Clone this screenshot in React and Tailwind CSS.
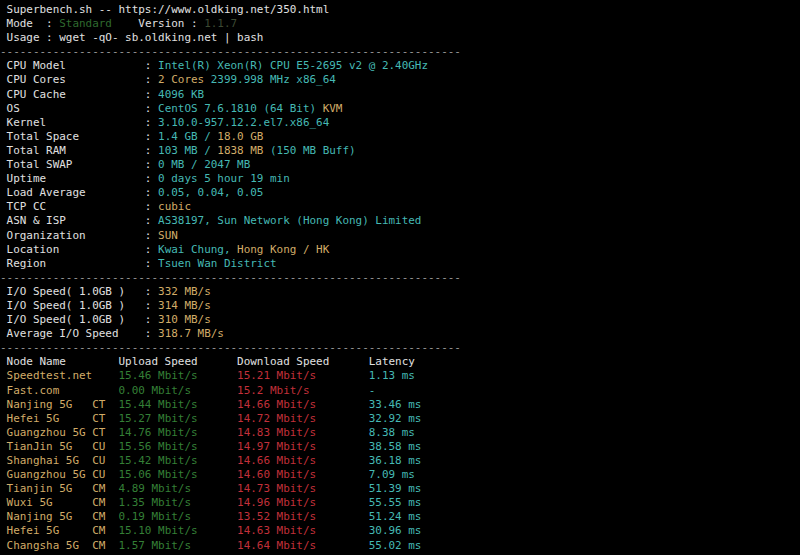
import React from "react";

const W = "text-[#e0e0e0]";
const C = "text-[#45b9b4]";
const Y = "text-[#d2ac68]";
const G = "text-[#347f36]";
const R = "text-[#c2303a]";
const DG = "text-[#2f6a2f]";
const DV = "text-[#3d4a33]";

const dash = "-".repeat(70);

const info = [
  ["CPU Model", [["Intel(R) Xeon(R) CPU E5-2695 v2 @ 2.40GHz", C]]],
  ["CPU Cores", [["2 Cores", Y], [" 2399.998 MHz x86_64", C]]],
  ["CPU Cache", [["4096 KB", C]]],
  ["OS", [["CentOS 7.6.1810 (64 Bit) ", C], ["KVM", Y]]],
  ["Kernel", [["3.10.0-957.12.2.el7.x86_64", C]]],
  ["Total Space", [["1.4 GB / ", C], ["18.0 GB", Y]]],
  ["Total RAM", [["103 MB / ", C], ["1838 MB", Y], [" (150 MB Buff)", C]]],
  ["Total SWAP", [["0 MB / 2047 MB", C]]],
  ["Uptime", [["0 days 5 hour 19 min", C]]],
  ["Load Average", [["0.05, 0.04, 0.05", C]]],
  ["TCP CC", [["cubic", Y]]],
  ["ASN & ISP", [["AS38197, Sun Network (Hong Kong) Limited", C]]],
  ["Organization", [["SUN", Y]]],
  ["Location", [["Kwai Chung, ", C], ["Hong Kong / HK", Y]]],
  ["Region", [["Tsuen Wan District", C]]],
];

const io = [
  ["I/O Speed( 1.0GB )", "332 MB/s"],
  ["I/O Speed( 1.0GB )", "314 MB/s"],
  ["I/O Speed( 1.0GB )", "310 MB/s"],
  ["Average I/O Speed", "318.7 MB/s"],
];

const nodes = [
  ["Speedtest.net", "15.46 Mbit/s", "15.21 Mbit/s", "1.13 ms"],
  ["Fast.com", "0.00 Mbit/s", "15.2 Mbit/s", "-"],
  ["Nanjing 5G   CT", "15.44 Mbit/s", "14.66 Mbit/s", "33.46 ms"],
  ["Hefei 5G     CT", "15.27 Mbit/s", "14.72 Mbit/s", "32.92 ms"],
  ["Guangzhou 5G CT", "14.76 Mbit/s", "14.83 Mbit/s", "8.38 ms"],
  ["TianJin 5G   CU", "15.56 Mbit/s", "14.97 Mbit/s", "38.58 ms"],
  ["Shanghai 5G  CU", "15.42 Mbit/s", "14.66 Mbit/s", "36.18 ms"],
  ["Guangzhou 5G CU", "15.06 Mbit/s", "14.60 Mbit/s", "7.09 ms"],
  ["Tianjin 5G   CM", "4.89 Mbit/s", "14.73 Mbit/s", "51.39 ms"],
  ["Wuxi 5G      CM", "1.35 Mbit/s", "14.96 Mbit/s", "55.55 ms"],
  ["Nanjing 5G   CM", "0.19 Mbit/s", "13.52 Mbit/s", "51.24 ms"],
  ["Hefei 5G     CM", "15.10 Mbit/s", "14.63 Mbit/s", "30.96 ms"],
  ["Changsha 5G  CM", "1.57 Mbit/s", "14.64 Mbit/s", "55.02 ms"],
];

const pad = (s, n) => s + " ".repeat(Math.max(0, n - s.length));

function Line({ parts }) {
  return (
    <div className="whitespace-pre h-[14.1px]">
      {parts.map(([t, c], i) => (
        <span key={i} className={c}>
          {t}
        </span>
      ))}
    </div>
  );
}

export default function App() {
  const lines = [];
  lines.push([[" Superbench.sh -- https://www.oldking.net/350.html", W]]);
  lines.push([[" Mode  : ", W], ["Standard", DG], ["    Version : ", W], ["1.1.7", DV]]);
  lines.push([[" Usage : wget -qO- sb.oldking.net | bash", W]]);
  lines.push([[dash, "text-[#9a9a9a]"]]);
  info.forEach(([label, vals]) => lines.push([[pad(" " + label, 22) + ": ", W], ...vals]));
  lines.push([[dash, "text-[#9a9a9a]"]]);
  io.forEach(([label, v]) => lines.push([[pad(" " + label, 22) + ": ", W], [v, Y]]));
  lines.push([[dash, "text-[#9a9a9a]"]]);
  lines.push([[pad(" Node Name", 18) + pad("Upload Speed", 18) + pad("Download Speed", 20) + "Latency", W]]);
  nodes.forEach(([n, up, down, lat]) =>
    lines.push([
      [pad(" " + n, 18), Y],
      [pad(up, 18), G],
      [pad(down, 20), R],
      [lat, C],
    ])
  );

  return (
    <div className="w-[800px] h-[555px] overflow-hidden bg-black pt-[3px] font-['DejaVu_Sans_Mono',monospace] text-[10.95px] leading-[14.1px]">
      {lines.map((parts, i) => (
        <Line key={i} parts={parts} />
      ))}
    </div>
  );
}
